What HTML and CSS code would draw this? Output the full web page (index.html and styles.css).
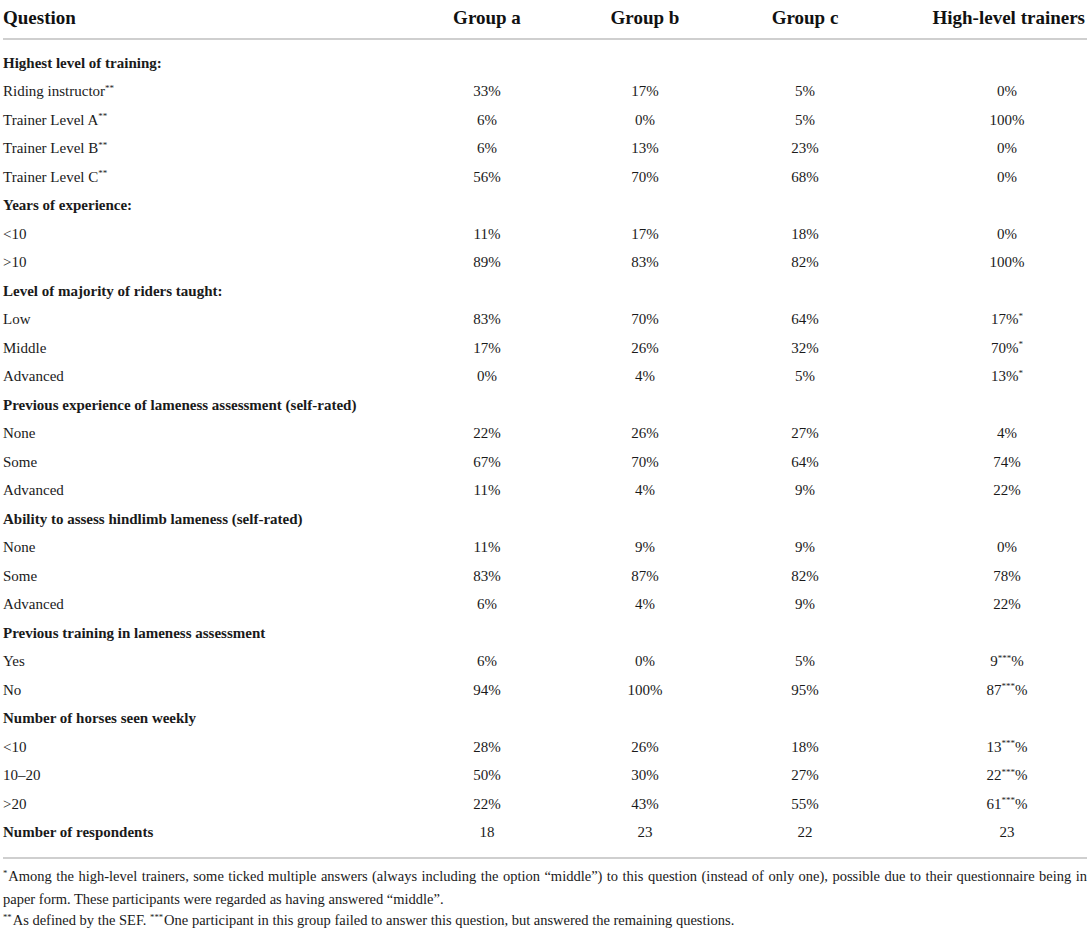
FILE: index.html
```html
<!DOCTYPE html>
<html lang="en">
<head>
    <meta charset="UTF-8">
    <title>Participant background</title>
    <link rel="stylesheet" href="styles.css">
</head>
<body>
    <div class="table-wrap">
        <table class="results">
            <colgroup>
                <col class="col-question">
                <col class="col-a">
                <col class="col-b">
                <col class="col-c">
                <col class="col-hl">
            </colgroup>
            <thead>
                <tr>
                    <th class="label">Question</th>
                    <th>Group a</th>
                    <th>Group b</th>
                    <th>Group c</th>
                    <th class="hl">High-level trainers</th>
                </tr>
            </thead>
            <tbody>
                <tr class="section first"><td class="label" colspan="5">Highest level of training:</td></tr>
                <tr><td class="label">Riding instructor<sup>**</sup></td><td>33%</td><td>17%</td><td>5%</td><td class="hl">0%</td></tr>
                <tr><td class="label">Trainer Level A<sup>**</sup></td><td>6%</td><td>0%</td><td>5%</td><td class="hl">100%</td></tr>
                <tr><td class="label">Trainer Level B<sup>**</sup></td><td>6%</td><td>13%</td><td>23%</td><td class="hl">0%</td></tr>
                <tr><td class="label">Trainer Level C<sup>**</sup></td><td>56%</td><td>70%</td><td>68%</td><td class="hl">0%</td></tr>

                <tr class="section"><td class="label" colspan="5">Years of experience:</td></tr>
                <tr><td class="label">&lt;10</td><td>11%</td><td>17%</td><td>18%</td><td class="hl">0%</td></tr>
                <tr><td class="label">&gt;10</td><td>89%</td><td>83%</td><td>82%</td><td class="hl">100%</td></tr>

                <tr class="section"><td class="label" colspan="5">Level of majority of riders taught:</td></tr>
                <tr><td class="label">Low</td><td>83%</td><td>70%</td><td>64%</td><td class="hl">17%<sup>*</sup></td></tr>
                <tr><td class="label">Middle</td><td>17%</td><td>26%</td><td>32%</td><td class="hl">70%<sup>*</sup></td></tr>
                <tr><td class="label">Advanced</td><td>0%</td><td>4%</td><td>5%</td><td class="hl">13%<sup>*</sup></td></tr>

                <tr class="section"><td class="label" colspan="5">Previous experience of lameness assessment (self-rated)</td></tr>
                <tr><td class="label">None</td><td>22%</td><td>26%</td><td>27%</td><td class="hl">4%</td></tr>
                <tr><td class="label">Some</td><td>67%</td><td>70%</td><td>64%</td><td class="hl">74%</td></tr>
                <tr><td class="label">Advanced</td><td>11%</td><td>4%</td><td>9%</td><td class="hl">22%</td></tr>

                <tr class="section"><td class="label" colspan="5">Ability to assess hindlimb lameness (self-rated)</td></tr>
                <tr><td class="label">None</td><td>11%</td><td>9%</td><td>9%</td><td class="hl">0%</td></tr>
                <tr><td class="label">Some</td><td>83%</td><td>87%</td><td>82%</td><td class="hl">78%</td></tr>
                <tr><td class="label">Advanced</td><td>6%</td><td>4%</td><td>9%</td><td class="hl">22%</td></tr>

                <tr class="section"><td class="label" colspan="5">Previous training in lameness assessment</td></tr>
                <tr><td class="label">Yes</td><td>6%</td><td>0%</td><td>5%</td><td class="hl">9<sup>***</sup>%</td></tr>
                <tr><td class="label">No</td><td>94%</td><td>100%</td><td>95%</td><td class="hl">87<sup>***</sup>%</td></tr>

                <tr class="section"><td class="label" colspan="5">Number of horses seen weekly</td></tr>
                <tr><td class="label">&lt;10</td><td>28%</td><td>26%</td><td>18%</td><td class="hl">13<sup>***</sup>%</td></tr>
                <tr><td class="label">10–20</td><td>50%</td><td>30%</td><td>27%</td><td class="hl">22<sup>***</sup>%</td></tr>
                <tr><td class="label">&gt;20</td><td>22%</td><td>43%</td><td>55%</td><td class="hl">61<sup>***</sup>%</td></tr>

                <tr class="section last"><td class="label">Number of respondents</td><td>18</td><td>23</td><td>22</td><td class="hl">23</td></tr>
            </tbody>
        </table>

        <div class="notes">
            <p><sup>*</sup>Among the high-level trainers, some ticked multiple answers (always including the option “middle”) to this question (instead of only one), possible due to their questionnaire being in paper form. These participants were regarded as having answered “middle”.</p>
            <p><sup>**</sup>As defined by the SEF. <sup>***</sup>One participant in this group failed to answer this question, but answered the remaining questions.</p>
        </div>
    </div>
</body>
</html>
```

FILE: styles.css
```css
body {
    margin: 0;
    background: #ffffff;
    color: #1a1a1a;
    font-family: 'Liberation Serif', 'Times New Roman', serif;
}

.table-wrap {
    width: 1084px;
    padding: 0 2px 0 3px;
}

.results {
    width: 1084px;
    border-collapse: collapse;
    table-layout: fixed;
}

.col-question { width: 404px; }
.col-a { width: 160px; }
.col-b { width: 156px; }
.col-c { width: 164px; }
.col-hl { width: 200px; }

.results th {
    font-size: 19px;
    font-weight: bold;
    text-align: center;
    color: #111;
    height: 36px;
    padding: 0 0 2px;
    vertical-align: middle;
    border-bottom: 2px solid #cfcfcf;
}

.results th.hl {
    text-align: right;
    padding-right: 2px;
}

.results td {
    font-size: 15px;
    text-align: center;
    height: 28.5px;
    padding: 0;
    vertical-align: middle;
}

.results td.hl {
    padding-left: 40px;
}

.results .label {
    text-align: left;
}

.section td.label {
    font-weight: bold;
}

.first td {
    padding-top: 9px;
}

.last td {
    padding-bottom: 10px;
    border-bottom: 2px solid #cfcfcf;
}

sup {
    font-size: 0.6em;
    vertical-align: baseline;
    position: relative;
    top: -0.6em;
}

.notes {
    font-size: 14.5px;
    line-height: 21px;
    color: #1a1a1a;
    padding-top: 7px;
}

.notes p {
    margin: 0;
    text-align: justify;
}

.notes sup {
    margin-right: 1px;
}
```
